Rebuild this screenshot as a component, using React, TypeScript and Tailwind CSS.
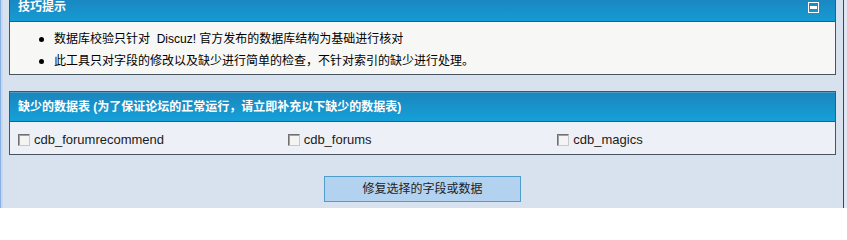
import React from "react";

const font = {
  fontFamily: '"Liberation Sans", "Noto Sans CJK SC", sans-serif',
};

function Checkbox() {
  return (
    <span className="inline-block w-[12px] h-[12px] border border-t-[#707070] border-l-[#707070] border-b-[#c8c8c8] border-r-[#c8c8c8] bg-[#f4f4f4] shadow-[inset_1px_1px_0_#a0a0a0]" />
  );
}

export default function App() {
  const tables = ["cdb_forumrecommend", "cdb_forums", "cdb_magics"];
  return (
    <div
      className="w-[847px] h-[208px] flex bg-[#d8e1ee] overflow-hidden text-[12px] text-black"
      style={font}
    >
      <div className="w-[1px] bg-[#86b0e2]" />
      <div className="w-[2px] bg-[#c9d8ee]" />
      <div className="flex-1 flex flex-col pl-[6px] pr-[7px]">
        {/* Panel 1 */}
        <div className="border border-t-0 border-[#46555f] flex flex-col">
          <div className="h-[22px] flex items-start justify-between bg-gradient-to-b from-[#1a88c1] to-[#149bd4] border-b border-[#46555f] pl-[8px] pr-[16px]">
            <span className="text-white font-bold text-[12px] leading-[15px]">技巧提示</span>
            <span className="mt-[2px] w-[11px] h-[11px] border border-white flex items-center justify-center">
              <span className="w-[7px] h-[3px] bg-white" />
            </span>
          </div>
          <div className="bg-[#f7f7f6] h-[52px] pt-[6px] pl-[29px] flex flex-col">
            <div className="flex items-center h-[22px]">
              <span className="w-[5px] h-[5px] rounded-full bg-black" />
              <span className="ml-[10px] leading-[22px]">数据库校验只针对&nbsp; Discuz! 官方发布的数据库结构为基础进行核对</span>
            </div>
            <div className="flex items-center h-[22px]">
              <span className="w-[5px] h-[5px] rounded-full bg-black" />
              <span className="ml-[10px] leading-[22px]">此工具只对字段的修改以及缺少进行简单的检查，不针对索引的缺少进行处理。</span>
            </div>
          </div>
        </div>

        {/* Panel 2 */}
        <div className="mt-[16px] border border-[#46555f] flex flex-col">
          <div className="h-[30px] flex items-center bg-gradient-to-b from-[#1b86bd] to-[#14a0d9] border-t border-t-[#4f9bc4] border-b border-b-[#46555f] pl-[8px]">
            <span className="text-white font-bold text-[12px] leading-[15px]">缺少的数据表 (为了保证论坛的正常运行，请立即补充以下缺少的数据表)</span>
          </div>
          <div className="bg-[#eef0f7] h-[32px] grid grid-cols-3 items-center pt-[3px] pl-[8px] pr-[8px]">
            {tables.map((t) => (
              <label key={t} className="flex items-center gap-[4px]">
                <Checkbox />
                <span className="text-[13px] leading-[16px] text-[#1a1a1a]">{t}</span>
              </label>
            ))}
          </div>
        </div>

        <div className="mt-[21px] flex justify-center">
          <button className="w-[197px] h-[26px] bg-[#b3d2f0] border border-[#4f9dca] text-[12px] text-[#222]">
            修复选择的字段或数据
          </button>
        </div>
      </div>
      <div className="w-[1px] bg-[#384858]" />
      <div className="w-[3px] bg-[#dfe6f1]" />
    </div>
  );
}
